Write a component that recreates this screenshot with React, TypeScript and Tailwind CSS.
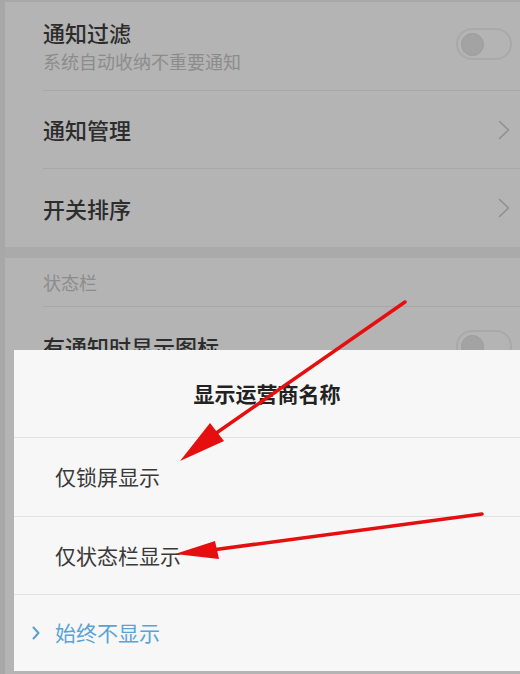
function Toggle() {
  return (
    <div className="w-[56px] h-[32px] rounded-full border-2 border-[#a9a9a9] flex items-center pl-[3px]">
      <div className="w-[23px] h-[23px] rounded-full bg-[#a3a3a3] border border-[#9c9c9c]" />
    </div>
  );
}

function Chevron({ className = '', w = 12, h = 20, sw = 1.6 }: { className?: string; w?: number; h?: number; sw?: number }) {
  return (
    <svg width={w} height={h} viewBox={`0 0 ${w} ${h}`} className={className}>
      <polyline
        points={`1.5,1.5 ${w - 1.5},${h / 2} 1.5,${h - 1.5}`}
        fill="none"
        stroke="currentColor"
        strokeWidth={sw}
        strokeLinecap="round"
        strokeLinejoin="round"
      />
    </svg>
  );
}

function Arrows() {
  return (
    <svg className="absolute inset-0 pointer-events-none" width="520" height="674" viewBox="0 0 520 674">
      <line x1="405" y1="302" x2="212" y2="436" stroke="#e50f0f" strokeWidth="3.5" strokeLinecap="round" />
      <polygon points="180,461 210,423 224,441" fill="#e50f0f" />
      <line x1="482" y1="514" x2="212" y2="550" stroke="#e50f0f" strokeWidth="3.5" strokeLinecap="round" />
      <polygon points="175,554 215,541 219,559" fill="#e50f0f" />
    </svg>
  );
}

export default function App() {
  return (
    <div className="relative w-[520px] h-[674px] overflow-hidden bg-[#b4b4b4] font-['Noto_Sans_CJK_SC','Noto_Sans',sans-serif]">
      <div className="h-full border-l-[5px] border-t-2 border-[#a8a8a8]">
        <div className="ml-[38px] h-[89px] border-b border-[#a7a7a7] flex justify-between pr-[8px]">
          <div className="pt-[16px]">
            <div className="text-[22px] leading-[28px] font-medium text-[#2c2c2c]">通知过滤</div>
            <div className="text-[18px] leading-[24px] mt-[3px] text-[#8c8c8c]">系统自动收纳不重要通知</div>
          </div>
          <div className="pt-[26px]">
            <Toggle />
          </div>
        </div>
        <div className="ml-[38px] h-[78px] border-b border-[#a7a7a7] flex items-center justify-between pr-[10px]">
          <span className="text-[22px] font-medium text-[#2c2c2c]">通知管理</span>
          <Chevron className="text-[#8f8f8f]" />
        </div>
        <div className="ml-[38px] h-[78px] flex items-center justify-between pr-[10px]">
          <span className="text-[22px] font-medium text-[#2c2c2c]">开关排序</span>
          <Chevron className="text-[#8f8f8f]" />
        </div>
        <div className="h-[11px] bg-[#aaaaaa]" />
        <div className="ml-[38px] h-[49px] border-b border-[#a7a7a7] flex items-center">
          <span className="text-[18px] text-[#8c8c8c]">状态栏</span>
        </div>
        <div className="ml-[38px] h-[78px] flex items-center justify-between pr-[8px]">
          <span className="text-[22px] font-medium text-[#2c2c2c]">有通知时显示图标</span>
          <Toggle />
        </div>
      </div>

      <div className="absolute left-[14px] top-[350px] right-0 h-[321px] bg-[#f7f7f7] flex flex-col">
        <div className="h-[88px] border-b border-[#e2e2e2] flex items-center justify-center">
          <span className="text-[21px] font-semibold text-[#222222]">显示运营商名称</span>
        </div>
        <div className="h-[79px] border-b border-[#e2e2e2] flex items-center pl-[41px]">
          <span className="text-[21px] text-[#3a3a3a]">仅锁屏显示</span>
        </div>
        <div className="h-[78px] border-b border-[#e2e2e2] flex items-center pl-[41px]">
          <span className="text-[21px] text-[#3a3a3a]">仅状态栏显示</span>
        </div>
        <div className="flex-1 flex items-center pl-[18px]">
          <Chevron w={8} h={14} sw={2} className="text-[#5a9fd0] mr-[15px]" />
          <span className="text-[21px] text-[#5aa3d6]">始终不显示</span>
        </div>
      </div>

      <Arrows />
    </div>
  );
}
